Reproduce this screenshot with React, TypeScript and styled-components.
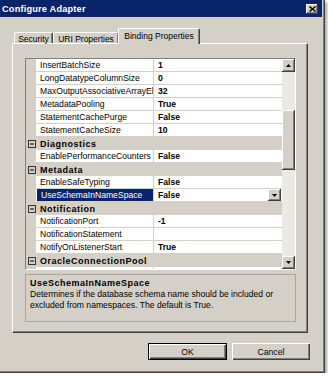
import React from "react";
import styled, { createGlobalStyle } from "styled-components";

const FACE = "#d4d0c8";
const NAVY = "#0a246a";
const SHADOW = "#808080";
const DARK = "#404040";

const Global = createGlobalStyle`
  html, body { margin: 0; padding: 0; background: #ffffff; }
  body { font-family: "Liberation Sans", Arial, sans-serif; color: #000; }
  * { box-sizing: border-box; }
`;

const Window = styled.div`
  width: 325px;
  height: 373px;
  background: ${FACE};
  padding: 0 3px 3px 0;
  box-shadow: inset -1px -1px 0 ${DARK}, inset -2px -2px 0 ${SHADOW},
    2px 2px 3px rgba(0, 0, 0, 0.35);
  display: flex;
  flex-direction: column;
`;

const TitleBar = styled.div`
  height: 17px;
  background: ${NAVY};
  color: #fff;
  font-weight: bold;
  font-size: 9.2px;
  letter-spacing: 0.2px;
  display: flex;
  align-items: center;
  justify-content: space-between;
  padding: 0 4px 0 2px;
`;

const CloseButton = styled.div`
  width: 12px;
  height: 10px;
  background: ${FACE};
  box-shadow: inset -1px -1px 0 ${DARK}, inset 1px 1px 0 #fff,
    inset -2px -2px 0 ${SHADOW};
  display: flex;
  align-items: center;
  justify-content: center;
`;

const Body = styled.div`
  flex: 1;
  padding: 11px 12px 0 12px;
  display: flex;
  flex-direction: column;
`;

const TabStrip = styled.div`
  height: 15px;
  display: flex;
  align-items: flex-end;
  padding-left: 2px;
  position: relative;
  z-index: 1;
`;

const Tab = styled.div<{ $active?: boolean; $w: number }>`
  width: ${(p) => p.$w}px;
  height: ${(p) => (p.$active ? 16 : 11)}px;
  margin-bottom: ${(p) => (p.$active ? -1 : 0)}px;
  margin-left: ${(p) => (p.$active ? -1 : 0)}px;
  background: ${FACE};
  border-top: 1px solid #fff;
  border-left: 1px solid #fff;
  border-right: 1px solid ${DARK};
  border-top-left-radius: 2px;
  border-top-right-radius: 2px;
  box-shadow: inset -1px 0 0 ${SHADOW};
  font-size: 8.5px;
  line-height: 10px;
  padding-top: ${(p) => (p.$active ? 2 : 1)}px;
  text-align: center;
  white-space: nowrap;
`;

const Panel = styled.div`
  width: 296px;
  height: 290px;
  background: ${FACE};
  border-top: 1px solid #fff;
  border-left: 1px solid #fff;
  border-right: 1px solid ${DARK};
  border-bottom: 1px solid ${DARK};
  box-shadow: inset -1px -1px 0 ${SHADOW};
  padding: 14px 12px 0 12px;
  display: flex;
  flex-direction: column;
`;

const Grid = styled.div`
  width: 271px;
  height: 212px;
  border: 1px solid ${SHADOW};
  border-right-color: #fff;
  border-bottom-color: #fff;
  display: flex;
  background: #fff;
`;

const Rows = styled.div`
  flex: 1;
  overflow: hidden;
  display: flex;
  flex-direction: column;
`;

const PropRow = styled.div`
  height: 13px;
  flex: none;
  display: grid;
  grid-template-columns: 10px 117px 1px 1fr;
  font-size: 8.6px;
  line-height: 12px;
`;

const Gutter = styled.div`
  background: ${FACE};
`;

const NameCell = styled.div`
  border-bottom: 1px solid ${FACE};
  overflow: hidden;
  display: flex;
  min-width: 0;
`;

const NameText = styled.span<{ $selected?: boolean }>`
  display: block;
  overflow: hidden;
  white-space: nowrap;
  height: 12px;
  padding-left: 4px;
  ${(p) =>
    p.$selected
      ? `background: ${NAVY}; color: #fff; margin-left: 1px; width: 116px; flex: none;`
      : "width: 117px;"}
`;

const Divider = styled.div`
  background: ${FACE};
`;

const ValueCell = styled.div`
  border-bottom: 1px solid ${FACE};
  padding-left: 4px;
  font-weight: bold;
  white-space: nowrap;
  overflow: hidden;
  display: flex;
  justify-content: space-between;
`;

const DropButton = styled.div`
  width: 13px;
  height: 12px;
  margin-right: 1px;
  background: ${FACE};
  box-shadow: inset -1px -1px 0 ${DARK}, inset 1px 1px 0 #fff,
    inset -2px -2px 0 ${SHADOW};
  display: flex;
  align-items: center;
  justify-content: center;
`;

const CategoryRow = styled.div`
  height: 13px;
  flex: none;
  background: ${FACE};
  display: flex;
  align-items: center;
  font-size: 9px;
  font-weight: bold;
  letter-spacing: 0.5px;
  white-space: nowrap;
`;

const Expander = styled.div`
  width: 14px;
  padding-left: 2px;
  display: flex;
  align-items: center;
`;

const ScrollBar = styled.div`
  width: 13px;
  display: flex;
  flex-direction: column;
  background: #ebe9e4;
`;

const ArrowButton = styled.div`
  height: 13px;
  flex: none;
  background: ${FACE};
  box-shadow: inset -1px -1px 0 ${DARK}, inset 1px 1px 0 #fff,
    inset -2px -2px 0 ${SHADOW};
  display: flex;
  align-items: center;
  justify-content: center;
`;

const Track = styled.div<{ $h?: number }>`
  ${(p) => (p.$h ? `height: ${p.$h}px; flex: none;` : "flex: 1;")}
`;

const Thumb = styled.div`
  height: 60px;
  flex: none;
  background: ${FACE};
  box-shadow: inset -1px -1px 0 ${DARK}, inset 1px 1px 0 #fff,
    inset -2px -2px 0 ${SHADOW};
`;

const Description = styled.div`
  margin-top: 4px;
  width: 271px;
  height: 48px;
  border: 1px solid #a8a6a0;
  padding: 3px 4px;
  font-size: 8.6px;
  line-height: 11px;
`;

const DescTitle = styled.div`
  font-weight: bold;
  font-size: 9px;
  letter-spacing: 0.5px;
`;

const ButtonRow = styled.div`
  margin-top: 10px;
  display: flex;
  justify-content: flex-end;
  gap: 5px;
`;

const Button = styled.div<{ $w: number; $default?: boolean }>`
  width: ${(p) => p.$w}px;
  height: 17px;
  background: ${FACE};
  font-size: 8.6px;
  display: flex;
  align-items: center;
  justify-content: center;
  box-shadow: ${(p) =>
    p.$default
      ? `inset 0 0 0 1px #000, inset 2px 2px 0 #fff, inset -2px -2px 0 ${DARK}, inset -3px -3px 0 ${SHADOW}`
      : `inset 1px 1px 0 #fff, inset -1px -1px 0 ${DARK}, inset -2px -2px 0 ${SHADOW}`};
`;

type Item =
  | { cat: string }
  | { name: string; value: string; selected?: boolean };

const items: Item[] = [
  { name: "InsertBatchSize", value: "1" },
  { name: "LongDatatypeColumnSize", value: "0" },
  { name: "MaxOutputAssociativeArrayElements", value: "32" },
  { name: "MetadataPooling", value: "True" },
  { name: "StatementCachePurge", value: "False" },
  { name: "StatementCacheSize", value: "10" },
  { cat: "Diagnostics" },
  { name: "EnablePerformanceCounters", value: "False" },
  { cat: "Metadata" },
  { name: "EnableSafeTyping", value: "False" },
  { name: "UseSchemaInNameSpace", value: "False", selected: true },
  { cat: "Notification" },
  { name: "NotificationPort", value: "-1" },
  { name: "NotificationStatement", value: "" },
  { name: "NotifyOnListenerStart", value: "True" },
  { cat: "OracleConnectionPool" },
  { name: "DecrPoolSize", value: "1" },
];

const Minus = () => (
  <svg width="8" height="8" viewBox="0 0 8 8">
    <rect x="0.5" y="0.5" width="7" height="7" fill="none" stroke="#333" />
    <line x1="2" y1="4" x2="6" y2="4" stroke="#000" />
  </svg>
);

const Tri = ({ up }: { up?: boolean }) => (
  <svg width="5" height="3" viewBox="0 0 5 3">
    <polygon points={up ? "2.5,0 5,3 0,3" : "0,0 5,0 2.5,3"} fill="#000" />
  </svg>
);

const CloseX = () => (
  <svg width="7" height="6" viewBox="0 0 7 6">
    <path d="M0.5 0.5 L6.5 5.5 M6.5 0.5 L0.5 5.5" stroke="#000" strokeWidth="1.4" />
  </svg>
);

export default function App() {
  return (
    <>
      <Global />
      <Window>
        <TitleBar>
          <span>Configure Adapter</span>
          <CloseButton>
            <CloseX />
          </CloseButton>
        </TitleBar>
        <Body>
          <TabStrip>
            <Tab $w={39}>Security</Tab>
            <Tab $w={66}>URI Properties</Tab>
            <Tab $w={82} $active>
              Binding Properties
            </Tab>
          </TabStrip>
          <Panel>
            <Grid>
              <Rows>
                {items.map((it, i) =>
                  "cat" in it ? (
                    <CategoryRow key={i}>
                      <Expander>
                        <Minus />
                      </Expander>
                      {it.cat}
                    </CategoryRow>
                  ) : (
                    <PropRow key={i}>
                      <Gutter />
                      <NameCell>
                        <NameText $selected={it.selected}>{it.name}</NameText>
                      </NameCell>
                      <Divider />
                      <ValueCell>
                        <span>{it.value}</span>
                        {it.selected && (
                          <DropButton>
                            <Tri />
                          </DropButton>
                        )}
                      </ValueCell>
                    </PropRow>
                  )
                )}
              </Rows>
              <ScrollBar>
                <ArrowButton>
                  <Tri up />
                </ArrowButton>
                <Track $h={38} />
                <Thumb />
                <Track />
                <ArrowButton>
                  <Tri />
                </ArrowButton>
              </ScrollBar>
            </Grid>
            <Description>
              <DescTitle>UseSchemaInNameSpace</DescTitle>
              <div>
                Determines if the database schema name should be included or
                excluded from namespaces. The default is True.
              </div>
            </Description>
          </Panel>
          <ButtonRow>
            <Button $w={79} $default>
              OK
            </Button>
            <Button $w={78}>Cancel</Button>
          </ButtonRow>
        </Body>
      </Window>
    </>
  );
}
